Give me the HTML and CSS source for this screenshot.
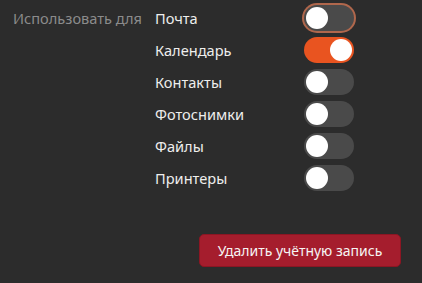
FILE: index.html
```html
<!DOCTYPE html>
<html lang="ru">
<head>
    <meta charset="UTF-8">
    <title>Учётная запись</title>
    <link rel="stylesheet" href="styles.css">
</head>
<body>
    <div class="account-panel">
        <div class="usage">
            <div class="usage-label">Использовать для</div>
            <div class="usage-list">
                <div class="usage-row">
                    <span class="usage-name">Почта</span>
                    <div class="switch focused"><div class="knob"></div></div>
                </div>
                <div class="usage-row">
                    <span class="usage-name">Календарь</span>
                    <div class="switch on"><div class="knob"></div></div>
                </div>
                <div class="usage-row">
                    <span class="usage-name">Контакты</span>
                    <div class="switch"><div class="knob"></div></div>
                </div>
                <div class="usage-row">
                    <span class="usage-name">Фотоснимки</span>
                    <div class="switch"><div class="knob"></div></div>
                </div>
                <div class="usage-row">
                    <span class="usage-name">Файлы</span>
                    <div class="switch"><div class="knob"></div></div>
                </div>
                <div class="usage-row">
                    <span class="usage-name">Принтеры</span>
                    <div class="switch"><div class="knob"></div></div>
                </div>
            </div>
        </div>

        <div class="actions">
            <button class="remove-button">Удалить учётную запись</button>
        </div>
    </div>
</body>
</html>
```

FILE: styles.css
```css
body {
    margin: 0;
    padding: 0;
    background: #2c2c2c;
    font-family: 'Noto Sans', 'Open Sans', sans-serif;
    font-size: 14.6px;
    color: #eeeeec;
    width: 422px;
    height: 283px;
    overflow: hidden;
}

.account-panel {
    padding: 2px 21px 0 13px;
}

.usage {
    display: flex;
}

.usage-label {
    width: 142px;
    height: 32px;
    line-height: 32px;
    color: #8b8b8b;
}

.usage-list {
    width: 199px;
}

.usage-row {
    height: 32px;
    display: flex;
    align-items: center;
}

.usage-name {
    flex: 1;
}

.switch {
    width: 50px;
    height: 26px;
    border-radius: 13px;
    background: #4a4a4a;
    display: flex;
    align-items: center;
    padding: 0 2px;
    box-sizing: border-box;
}

.switch.focused {
    box-shadow: 0 0 0 2px #b0674c;
}

.switch.on {
    background: #e95420;
    justify-content: flex-end;
}

.knob {
    width: 22px;
    height: 22px;
    border-radius: 50%;
    background: #ffffff;
}

.actions {
    display: flex;
    justify-content: flex-end;
    margin-top: 40px;
}

.remove-button {
    width: 202px;
    height: 33px;
    border: 1px solid #8c1623;
    border-radius: 5px;
    background: #a51d2d;
    color: #f6f5f4;
    font-family: inherit;
    font-size: 14px;
    padding: 0;
}
```
